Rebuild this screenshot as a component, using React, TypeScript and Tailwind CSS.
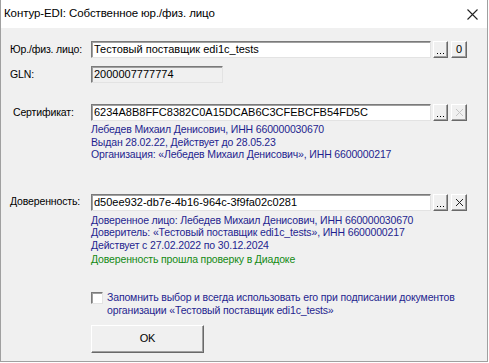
import type { ReactNode } from 'react';

const sunken =
  'border border-t-[#7a7a7a] border-l-[#7a7a7a] border-b-[#e3e3e3] border-r-[#e3e3e3] shadow-[inset_1px_1px_0_#a0a0a0]';
const raised =
  'border border-t-white border-l-white border-b-[#696969] border-r-[#696969] shadow-[inset_-1px_-1px_0_#a0a0a0] bg-[#f0f0f0]';

function Label({ children, className = '' }: { children: ReactNode; className?: string }) {
  return <div className={'w-[90px] shrink-0 pl-[9px] ' + className}>{children}</div>;
}

function Field({ value, width = 'w-[340px]', bg = 'bg-white' }: { value: string; width?: string; bg?: string }) {
  return (
    <div
      className={`${width} ${bg} ${sunken} h-[17px] flex items-center pl-[2px] text-[11px] tracking-normal text-black whitespace-nowrap overflow-hidden`}
    >
      {value}
    </div>
  );
}

function DotsButton() {
  return (
    <div className={`${raised} ml-[2px] flex h-[17px] w-[15px] items-end justify-center pb-[3px]`}>
      <svg width="7" height="1" viewBox="0 0 7 1">
        <rect x="0" y="0" width="1" height="1" fill="#000" />
        <rect x="3" y="0" width="1" height="1" fill="#000" />
        <rect x="6" y="0" width="1" height="1" fill="#000" />
      </svg>
    </div>
  );
}

function SideButton({ children }: { children: ReactNode }) {
  return <div className={`${raised} ml-[3px] flex h-[17px] w-[16px] items-center justify-center`}>{children}</div>;
}

function Cross({ color }: { color: string }) {
  return (
    <svg width="9" height="9" viewBox="0 0 9 9">
      <path d="M1 1 L8 8 M8 1 L1 8" stroke={color} strokeWidth="1" fill="none" />
    </svg>
  );
}

export default function App() {
  return (
    <div
      className="w-[489px] h-[363px] bg-white text-[10.5px] tracking-[-0.15px] text-black"
      style={{ fontFamily: '"Liberation Sans", Arial, sans-serif' }}
    >
      <div className="flex h-[362px] w-[488px] flex-col border-r border-b border-l border-[#a0a0a0] bg-[#f0f0f0]">
        {/* Title bar */}
        <div className="flex h-[28px] shrink-0 items-center justify-between bg-white pl-[3px] pr-[9px]">
          <span className="text-[11.5px] tracking-[-0.1px] text-black">Контур-EDI: Собственное юр./физ. лицо</span>
          <svg width="11" height="11" viewBox="0 0 11 11">
            <path d="M0.5 0.5 L10.5 10.5 M10.5 0.5 L0.5 10.5" stroke="#222" strokeWidth="1.1" fill="none" />
          </svg>
        </div>

        <div className="flex flex-col pt-[13px]">
          {/* Юр./физ. лицо */}
          <div className="flex items-center">
            <Label>Юр./физ. лицо:</Label>
            <Field value="Тестовый поставщик edi1c_tests" />
            <DotsButton />
            <SideButton>
              <span className="text-[11px] leading-none">0</span>
            </SideButton>
          </div>

          {/* GLN */}
          <div className="mt-[8px] flex items-center">
            <Label>GLN:</Label>
            <Field value="2000007777774" width="w-[132px]" bg="bg-[#f0f0f0]" />
          </div>

          {/* Сертификат */}
          <div className="mt-[21px] flex items-center">
            <Label className="pl-[12px]">Сертификат:</Label>
            <Field value="6234A8B8FFC8382C0A15DCAB6C3CFEBCFB54FD5C" />
            <DotsButton />
            <SideButton>
              <Cross color="#c4c4c4" />
            </SideButton>
          </div>
          <div className="ml-[90px] mt-[2px] flex flex-col text-[#1f1f8f] leading-[12.5px]">
            <span>Лебедев Михаил Денисович, ИНН 660000030670</span>
            <span>Выдан 28.02.22, Действует до 28.05.23</span>
            <span>Организация: «Лебедев Михаил Денисович», ИНН 6600000217</span>
          </div>

          {/* Доверенность */}
          <div className="mt-[33px] flex items-center">
            <Label>Доверенность:</Label>
            <Field value="d50ee932-db7e-4b16-964c-3f9fa02c0281" />
            <DotsButton />
            <SideButton>
              <Cross color="#222" />
            </SideButton>
          </div>
          <div className="ml-[90px] mt-[3px] flex flex-col text-[#1f1f8f] leading-[12.5px]">
            <span>Доверенное лицо: Лебедев Михаил Денисович, ИНН 660000030670</span>
            <span>Доверитель: «Тестовый поставщик edi1c_tests», ИНН 6600000217</span>
            <span>Действует с 27.02.2022 по 30.12.2024</span>
            <span className="mt-[2px] text-[#138a13]">Доверенность прошла проверку в Диадоке</span>
          </div>

          {/* Запомнить */}
          <div className="ml-[90px] mt-[25px] flex items-start">
            <div className={`${sunken} mt-[1px] h-[12px] w-[12px] shrink-0 bg-white`} />
            <div className="ml-[4px] flex flex-col text-[#1f1f8f] leading-[13px]">
              <span>Запомнить выбор и всегда использовать его при подписании документов</span>
              <span>организации «Тестовый поставщик edi1c_tests»</span>
            </div>
          </div>

          {/* OK */}
          <div className={`${raised} ml-[90px] mt-[8px] flex h-[28px] w-[113px] items-center justify-center text-[11px]`}>
            OK
          </div>
        </div>
      </div>
    </div>
  );
}
